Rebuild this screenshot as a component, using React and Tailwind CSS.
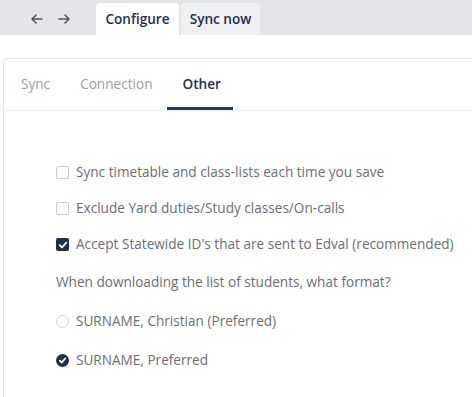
import React from "react";

function Check({ checked }) {
  return checked ? (
    <span className="w-[13px] h-[13px] rounded-[2px] bg-[#1e2f4f] flex items-center justify-center shrink-0">
      <svg width="10" height="10" viewBox="0 0 10 10"><path d="M1.8 5.2 L4 7.4 L8.3 2.6" stroke="white" strokeWidth="1.8" fill="none" strokeLinecap="round" strokeLinejoin="round"/></svg>
    </span>
  ) : (
    <span className="w-[13px] h-[13px] rounded-[2px] border border-[#c9ccd2] bg-white shrink-0" />
  );
}

function Radio({ checked }) {
  return checked ? (
    <span className="w-[13px] h-[13px] rounded-full bg-[#1e2f4f] flex items-center justify-center shrink-0">
      <svg width="9" height="9" viewBox="0 0 10 10"><path d="M2 5.2 L4.1 7.3 L8 2.8" stroke="white" strokeWidth="1.9" fill="none" strokeLinecap="round" strokeLinejoin="round"/></svg>
    </span>
  ) : (
    <span className="w-[13px] h-[13px] rounded-full border border-[#d3d6db] bg-white shrink-0" />
  );
}

export default function App() {
  return (
    <div className="w-[472px] h-[397px] bg-white overflow-hidden text-[13.6px]" style={{ fontFamily: '"Open Sans", "Noto Sans", sans-serif' }}>
      <div className="h-[35px] bg-[#e3e5e9] flex items-end">
        <div className="flex items-center gap-[15px] pl-[31px] pr-[26px] h-[32px]">
          <svg width="12" height="12" viewBox="0 0 12 12"><path d="M11 6H1.2M5 2L1 6l4 4" stroke="#4b5563" strokeWidth="1.5" fill="none" strokeLinecap="round" strokeLinejoin="round"/></svg>
          <svg width="12" height="12" viewBox="0 0 12 12"><path d="M1 6h9.8M7 2l4 4-4 4" stroke="#4b5563" strokeWidth="1.5" fill="none" strokeLinecap="round" strokeLinejoin="round"/></svg>
        </div>
        <div className="w-[83px] h-[32px] bg-white rounded-t-[4px] flex items-center justify-center text-[#1e2f4f] font-semibold">Configure</div>
        <div className="ml-[2px] w-[79px] h-[32px] bg-[#eef0f2] rounded-t-[4px] flex items-center justify-center text-[#1e2f4f] font-semibold">Sync now</div>
      </div>
      <div className="pt-[23px] pl-[3px]">
        <div className="border-l border-t border-[#e4e6ea] rounded-tl-[5px] h-[400px]">
          <div className="flex h-[52px] border-b border-[#eceef0] pl-[17px]">
            <div className="flex items-center text-[#9a9ea6] mr-[30px]">Sync</div>
            <div className="flex items-center text-[#9a9ea6] mr-[15px]">Connection</div>
            <div className="flex items-center text-[#1e2f4f] font-semibold border-b-[3px] border-[#1e3a68] pt-[3px] px-[15px] w-[66px]">Other</div>
          </div>
          <div className="pl-[52px] pt-[43px] text-[#6b6e73] flex flex-col">
            <div className="flex items-center gap-[7px] h-[36px]"><Check /><span>Sync timetable and class-lists each time you save</span></div>
            <div className="flex items-center gap-[7px] h-[36px]"><Check /><span>Exclude Yard duties/Study classes/On-calls</span></div>
            <div className="flex items-center gap-[7px] h-[37px]"><Check checked /><span>Accept Statewide ID's that are sent to Edval (recommended)</span></div>
            <div className="flex items-center h-[38px]"><span>When downloading the list of students, what format?</span></div>
            <div className="flex items-center gap-[7px] h-[40px]"><Radio /><span>SURNAME, Christian (Preferred)</span></div>
            <div className="flex items-center gap-[7px] h-[38px]"><Radio checked /><span>SURNAME, Preferred</span></div>
          </div>
        </div>
      </div>
    </div>
  );
}
